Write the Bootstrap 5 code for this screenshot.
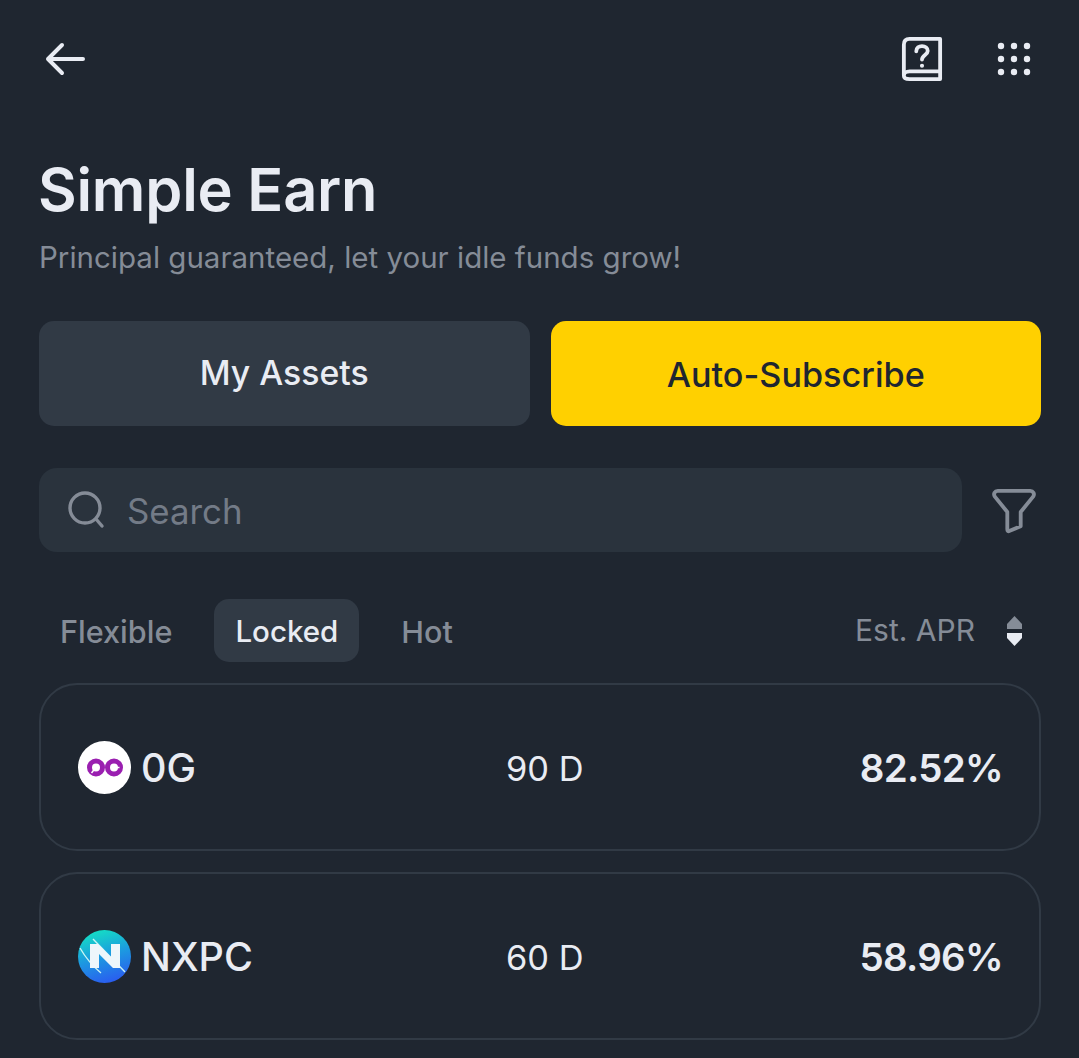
<!DOCTYPE html>
<html lang="en">
<head>
  <meta charset="UTF-8" />
  <meta name="viewport" content="width=device-width, initial-scale=1.0" />
  <title>Simple Earn</title>
  <link href="https://cdn.jsdelivr.net/npm/bootstrap@5.3.2/dist/css/bootstrap.min.css" rel="stylesheet" />
  <style>
    html, body { height: 100%; }
    body { background: #1f2630; color: #e9ecf3; font-family: Inter, "Noto Sans", sans-serif; overflow: hidden; }
    .page-wrap { padding: 0 38px 0 39px; }
    .top-bar { height: 118px; padding-right: 10px; }
    .page-title { font-size: 59.5px; font-weight: 600; line-height: 68px; margin: 37px 0 0 -1px; letter-spacing: -0.2px; }
    .page-sub { font-size: 29.5px; line-height: 40px; color: #858c97; margin: 14px 0 0; }
    .action-row { margin-top: 44px; gap: 21px; }
    .action-btn { flex: 1 1 0; height: 105px; border: 0; border-radius: 15px; font-size: 33.8px; font-weight: 500; }
    .action-dark { background: #313a45; color: #e9ecf3; }
    .action-yellow { background: #ffd000; color: #1f2630; font-size: 34.2px; padding-top: 4px; }
    .search-row { margin-top: 42px; }
    .search-box { width: 923px; height: 84px; background: #2a333d; border-radius: 18px; padding-left: 28px; gap: 22px; color: #737b87; font-size: 34.8px; }
    .search-box span { padding-top: 2px; }
    .filter-ico { margin: 2px 0 0 30px; }
    .tab-row { margin-top: 47px; height: 63px; gap: 21px; }
    .tab-item { font-size: 30.5px; font-weight: 500; color: #858c97; padding: 2px 21px 0; height: 63px; border-radius: 15px; }
    .tab-item:first-child { font-size: 30.6px; padding-left: 21px; }
    .tab-on { background: #313a45; color: #e9ecf3; font-size: 29.5px; }
    .apr-sort { font-size: 30px; color: #858c97; gap: 31px; padding-right: 18px; }
    .coin-card { height: 168px; border: 2px solid #313a45; border-radius: 38px; padding: 0 36px 0 37px; margin-bottom: 21px; background: transparent; }
    .coin-name { width: 428px; gap: 11px; font-size: 39.5px; font-weight: 500; }
    .coin-name span { padding-top: 4px; margin-left: -1px; }
    .coin-days { font-size: 34.4px; padding-top: 4px; }
    .coin-rate { font-size: 38.5px; font-weight: 600; letter-spacing: -0.7px; margin-left: auto; padding-top: 4px; }
    .list-top { margin-top: 21px; }
  </style>
</head>
<body>
  <div class="page-wrap">
    <div class="top-bar d-flex align-items-center justify-content-between">
      <svg width="48" height="40" viewBox="0 0 48 40" fill="none" stroke="#e9ecf3" stroke-width="4" stroke-linecap="round" stroke-linejoin="round">
        <path d="M44 20H9M23 6L9 20L23 34"/>
      </svg>
      <div class="d-flex align-items-center" style="gap:54px">
        <svg width="42" height="46" viewBox="0 0 44 46" fill="none" stroke="#e9ecf3" stroke-width="4" stroke-linecap="round" stroke-linejoin="round">
          <path d="M41 36H9C5 36 3 38.5 3 40.5C3 43 5 44 9 44H41V2H9C5 2 3 4 3 8V40"/>
          <path d="M16 15C16 11 19 9.5 22 9.5C25.500 9.500 28 11.500 28 14.500C28 18.500 22 19 22 23.500"/>
          <circle cx="22" cy="30" r="1.400" fill="#e9ecf3" stroke-width="1.500"/>
        </svg>
        <svg width="34" height="34" viewBox="0 0 34 34" fill="#e9ecf3">
          <circle cx="4" cy="4" r="3.200"/><circle cx="17" cy="4" r="3.200"/><circle cx="30" cy="4" r="3.200"/>
          <circle cx="4" cy="17" r="3.200"/><circle cx="17" cy="17" r="3.200"/><circle cx="30" cy="17" r="3.200"/>
          <circle cx="4" cy="30" r="3.200"/><circle cx="17" cy="30" r="3.200"/><circle cx="30" cy="30" r="3.200"/>
        </svg>
      </div>
    </div>

    <h1 class="page-title">Simple Earn</h1>
    <p class="page-sub">Principal guaranteed, let your idle funds grow!</p>

    <div class="action-row d-flex">
      <button class="action-btn action-dark">My Assets</button>
      <button class="action-btn action-yellow">Auto-Subscribe</button>
    </div>

    <div class="search-row d-flex align-items-center">
      <div class="search-box d-flex align-items-center">
        <svg width="38" height="38" viewBox="0 0 38 38" fill="none" stroke="#858c97" stroke-width="3.400" stroke-linecap="round">
          <circle cx="18" cy="17" r="15"/><path d="M29 28L35 35"/>
        </svg>
        <span>Search</span>
      </div>
      <svg class="filter-ico" width="44" height="46" viewBox="0 0 46 48" fill="none" stroke="#858c97" stroke-width="4" stroke-linecap="round" stroke-linejoin="round">
        <path d="M6 3H40C43 3 45 6 43 9L30 25V40L18 45C17 45.500 16 45 16 43V25L3 9C1 6 3 3 6 3Z"/>
      </svg>
    </div>

    <div class="tab-row d-flex align-items-center">
      <div class="tab-item d-flex align-items-center">Flexible</div>
      <div class="tab-item tab-on d-flex align-items-center">Locked</div>
      <div class="tab-item d-flex align-items-center">Hot</div>
      <div class="apr-sort d-flex align-items-center ms-auto">
        <span>Est. APR</span>
        <svg width="17" height="32" viewBox="0 0 17 32">
          <path d="M8.500 1L16 9V14H1V9Z" fill="#858c97"/>
          <path d="M1 18H16V23L8.500 31L1 23Z" fill="#e9ecf3"/>
        </svg>
      </div>
    </div>

    <div class="list-top">
      <div class="coin-card d-flex align-items-center">
        <div class="coin-name d-flex align-items-center">
          <svg width="53" height="53" viewBox="0 0 53 53">
            <circle cx="26.500" cy="26.500" r="26.500" fill="#fff"/>
            <circle cx="18" cy="26.500" r="6.500" fill="none" stroke="#9a1fb0" stroke-width="5"/>
            <circle cx="36" cy="26.500" r="6.500" fill="none" stroke="#9a1fb0" stroke-width="5"/>
            <path d="M13.500 32L19 25" stroke="#fff" stroke-width="1.500"/>
            <path d="M35 26.500H41.500" stroke="#fff" stroke-width="1.500"/>
          </svg>
          <span>0G</span>
        </div>
        <span class="coin-days">90 D</span>
        <span class="coin-rate">82.52%</span>
      </div>
      <div class="coin-card d-flex align-items-center">
        <div class="coin-name d-flex align-items-center">
          <svg width="53" height="53" viewBox="0 0 53 53">
            <defs>
              <linearGradient id="nxpcFill" x1="0.300" y1="0" x2="0.600" y2="1">
                <stop offset="0" stop-color="#14e0c4"/>
                <stop offset="0.500" stop-color="#1c9ae0"/>
                <stop offset="1" stop-color="#2a5cf0"/>
              </linearGradient>
            </defs>
            <circle cx="26.500" cy="26.500" r="26.500" fill="url(#nxpcFill)"/>
            <path d="M2 18Q10 32 23 43M15 9L47 42" fill="none" stroke="#c9f5f5" stroke-width="1.400"/>
            <path d="M12 38V14H20L33 27V14H42V38H35L21 24V38Z" fill="#eef6fb"/>
          </svg>
          <span>NXPC</span>
        </div>
        <span class="coin-days">60 D</span>
        <span class="coin-rate">58.96%</span>
      </div>
    </div>
  </div>
</body>
</html>
